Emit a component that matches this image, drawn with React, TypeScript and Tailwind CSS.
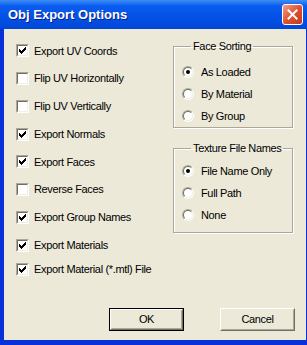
const checks = [
  { label: "Export UV Coords", on: true },
  { label: "Flip UV Horizontally", on: false },
  { label: "Flip UV Vertically", on: false },
  { label: "Export Normals", on: true },
  { label: "Export Faces", on: true },
  { label: "Reverse Faces", on: false },
  { label: "Export Group Names", on: true },
  { label: "Export Materials", on: true },
  { label: "Export Material (*.mtl) File", on: true },
]

function Check({ on }: { on: boolean }) {
  return (
    <div className="w-[13px] h-[13px] shrink-0 border border-t-[#ACA899] border-l-[#ACA899] border-r-white border-b-white">
      <div className="w-full h-full bg-white border border-t-[#716F64] border-l-[#716F64] border-r-[#F1EFE2] border-b-[#F1EFE2] flex items-center justify-center">
        {on && (
          <svg width="7" height="7" viewBox="0 0 7 7" shapeRendering="crispEdges">
            <rect x="6" y="0" width="1" height="1" fill="#000" />
            <rect x="5" y="1" width="2" height="1" fill="#000" />
            <rect x="0" y="2" width="1" height="1" fill="#000" />
            <rect x="4" y="2" width="3" height="1" fill="#000" />
            <rect x="0" y="3" width="2" height="1" fill="#000" />
            <rect x="3" y="3" width="3" height="1" fill="#000" />
            <rect x="0" y="4" width="5" height="1" fill="#000" />
            <rect x="1" y="5" width="3" height="1" fill="#000" />
            <rect x="2" y="6" width="1" height="1" fill="#000" />
          </svg>
        )}
      </div>
    </div>
  )
}

function Radio({ label, on }: { label: string; on?: boolean }) {
  return (
    <div className="flex items-center h-[22px]">
      <div className="w-[12px] h-[12px] shrink-0 rounded-full border border-t-[#ACA899] border-l-[#ACA899] border-r-white border-b-white">
        <div className="w-full h-full rounded-full bg-white border border-t-[#716F64] border-l-[#716F64] border-r-[#F1EFE2] border-b-[#F1EFE2] flex items-center justify-center">
          {on && <div className="w-[4px] h-[4px] rounded-full bg-black" />}
        </div>
      </div>
      <span className="ml-[7px] whitespace-nowrap">{label}</span>
    </div>
  )
}

function Group({ title, children }: { title: string; children: React.ReactNode }) {
  return (
    <fieldset className="border border-[#ACA899] shadow-[inset_1px_1px_0_#fff,1px_1px_0_#fff] px-[8px]">
      <legend className="ml-[9px] px-[2px] leading-[13px] whitespace-nowrap">{title}</legend>
      {children}
    </fieldset>
  )
}

function Btn({ label, def }: { label: string; def?: boolean }) {
  return (
    <div className={def ? "w-[75px] h-[23px] border border-black" : "w-[75px] h-[23px]"}>
      <div className="w-full h-full border border-t-white border-l-white border-r-[#716F64] border-b-[#716F64] bg-[#ECE9D8]">
        <div className="w-full h-full border border-t-[#ECE9D8] border-l-[#ECE9D8] border-r-[#ACA899] border-b-[#ACA899] flex items-center justify-center">
          {label}
        </div>
      </div>
    </div>
  )
}

export default function App() {
  return (
    <div className="w-[307px] h-[345px] bg-[#0831D9] flex flex-col overflow-hidden font-['Liberation_Sans',Arial,sans-serif] text-[11px] tracking-[-0.35px] text-black">
      {/* title bar */}
      <div className="h-[29px] shrink-0 flex items-center pl-[8px] pr-[4px] bg-linear-to-b from-[#3D8DF5] from-0% via-[#0A5CF0] via-20% to-[#0047D9] to-100%">
        <span className="text-white font-bold text-[13px] tracking-normal [text-shadow:1px_1px_0_#0A1E8C]">Obj Export Options</span>
        <div className="ml-auto w-[21px] h-[21px] rounded-[3px] border border-white bg-linear-to-br from-[#F0A08A] via-[#E0512E] to-[#C23A17] flex items-center justify-center">
          <svg width="11" height="11" viewBox="0 0 11 11">
            <path d="M1.5 1.5 L9.5 9.5 M9.5 1.5 L1.5 9.5" stroke="#fff" strokeWidth="2" strokeLinecap="square" />
          </svg>
        </div>
      </div>

      {/* client area */}
      <div className="flex-1 ml-[4px] mr-[1px] mb-[5px] bg-[#ECE9D8] flex flex-col">
        <div className="flex">
          <div className="pl-[12px] pt-[8px] w-[169px] shrink-0">
            {checks.map((c, i) => (
              <div key={c.label} className={i === checks.length - 1 ? "flex items-center h-[20px]" : "flex items-center h-[27.75px]"}>
                <Check on={c.on} />
                <span className="ml-[5px] whitespace-nowrap">{c.label}</span>
              </div>
            ))}
          </div>

          <div className="w-[120px] pt-[11px] flex flex-col gap-[14px]">
            <Group title="Face Sorting">
              <div className="pt-[8px] pb-[0px]">
                <Radio label="As Loaded" on />
                <Radio label="By Material" />
                <Radio label="By Group" />
              </div>
            </Group>
            <Group title="Texture File Names">
              <div className="pt-[5px] pb-[6px]">
                <Radio label="File Name Only" on />
                <Radio label="Full Path" />
                <Radio label="None" />
              </div>
            </Group>
          </div>
        </div>

        <div className="mt-auto flex justify-end gap-[36px] pr-[11px] pb-[9px]">
          <Btn label="OK" def />
          <Btn label="Cancel" />
        </div>
      </div>
    </div>
  )
}
